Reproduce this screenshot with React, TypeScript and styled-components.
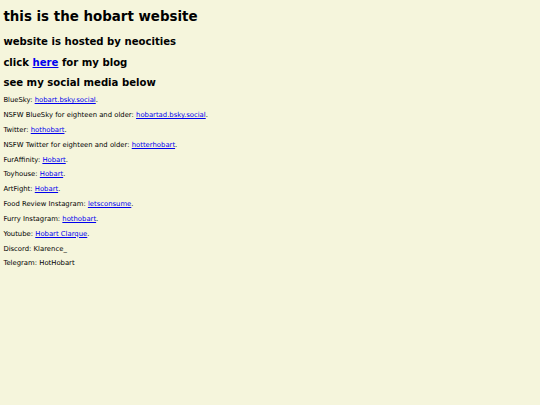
import styled, { createGlobalStyle } from 'styled-components'

// the page is a 1280px wide page shrunk to 540px, so everything is scaled by 540 / 1280
const GlobalStyle = createGlobalStyle`
  html, body {
    background: #f5f5dc;
  }
  body {
    margin: 3.375px;
    font-family: Verdana, "DejaVu Sans", sans-serif;
    color: #000;
  }
`

type Social = {
  label: string
  handle: string
  link?: boolean
}

const socials: Social[] = [
  { label: 'BlueSky', handle: 'hobart.bsky.social', link: true },
  { label: 'NSFW BlueSky for eighteen and older', handle: 'hobartad.bsky.social', link: true },
  { label: 'Twitter', handle: 'hothobart', link: true },
  { label: 'NSFW Twitter for eighteen and older', handle: 'hotterhobart', link: true },
  { label: 'FurAffinity', handle: 'Hobart', link: true },
  { label: 'Toyhouse', handle: 'Hobart', link: true },
  { label: 'ArtFight', handle: 'Hobart', link: true },
  { label: 'Food Review Instagram', handle: 'letsconsume', link: true },
  { label: 'Furry Instagram', handle: 'hothobart', link: true },
  { label: 'Youtube', handle: 'Hobart Clarque', link: true },
  { label: 'Discord', handle: 'Klarence_' },
  { label: 'Telegram', handle: 'HotHobart' },
]

const App = () => {
  return (
    <>
      <GlobalStyle />
      <Title>this is the hobart website</Title>
      <Heading>website is hosted by neocities</Heading>
      <Heading>
        click <Link href="#">here</Link> for my blog
      </Heading>
      <Heading>see my social media below</Heading>
      {socials.map((s) => (
        <Line key={s.label}>
          {s.label}:{' '}
          {s.link ? (
            <>
              <Link href="#">{s.handle}</Link>.
            </>
          ) : (
            s.handle
          )}
        </Line>
      ))}
    </>
  )
}

export default App

const Title = styled.h1`
  font-size: 13.4px;
  font-weight: bold;
  margin: 6px 0 12px;
`
const Heading = styled.h2`
  font-size: 10.125px;
  font-weight: bold;
  margin: 9.2px 0 8.4px;
`
const Line = styled.p`
  font-size: 6.85px;
  margin: 6.85px 0;
`
const Link = styled.a`
  color: #0000ee;
  text-decoration: underline;
`
